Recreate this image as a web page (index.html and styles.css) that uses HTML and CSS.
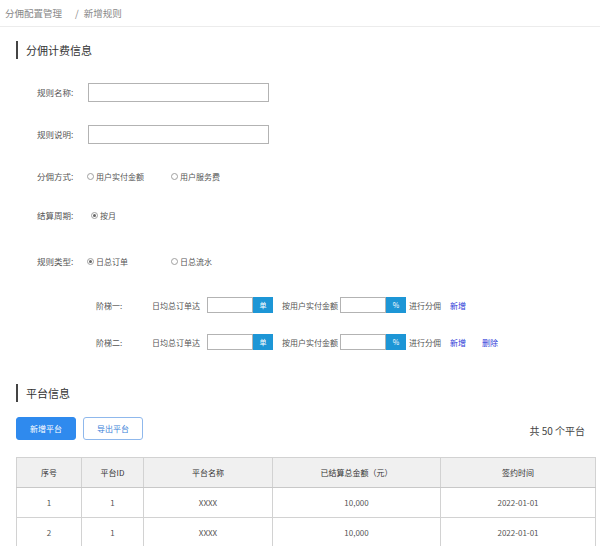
FILE: index.html
```html
<!DOCTYPE html>
<html lang="zh-CN">
<head>
<meta charset="utf-8">
<title>新增规则</title>
<link rel="stylesheet" href="styles.css">
</head>
<body>
<div class="crumb">
  <span class="crumb-item">分佣配置管理</span>
  <span class="crumb-sep">/</span>
  <span class="crumb-item">新增规则</span>
</div>
<div class="page">
  <div class="sec-title s1">分佣计费信息</div>
  <div class="form">
    <div class="row r1">
      <span class="label">规则名称:</span>
      <span class="input wide"></span>
    </div>
    <div class="row r2">
      <span class="label">规则说明:</span>
      <span class="input wide"></span>
    </div>
    <div class="row r3">
      <span class="label">分佣方式:</span>
      <span class="radio opt"><i class="dot"></i>用户实付金额</span>
      <span class="radio"><i class="dot"></i>用户服务费</span>
    </div>
    <div class="row r4">
      <span class="label">结算周期:</span>
      <span class="radio shift"><i class="dot on"></i>按月</span>
    </div>
    <div class="row r5">
      <span class="label">规则类型:</span>
      <span class="radio opt"><i class="dot on"></i>日总订单</span>
      <span class="radio"><i class="dot"></i>日总流水</span>
    </div>
    <div class="row step s-a">
      <span class="step-label">阶梯一:</span>
      <span class="txt t-order">日均总订单达</span>
      <span class="input small"></span><span class="suffix">单</span>
      <span class="txt t-pay">按用户实付金额</span>
      <span class="input small"></span><span class="suffix">%</span>
      <span class="txt t-go">进行分佣</span>
      <a class="link">新增</a>
    </div>
    <div class="row step s-b">
      <span class="step-label">阶梯二:</span>
      <span class="txt t-order">日均总订单达</span>
      <span class="input small"></span><span class="suffix">单</span>
      <span class="txt t-pay">按用户实付金额</span>
      <span class="input small"></span><span class="suffix">%</span>
      <span class="txt t-go">进行分佣</span>
      <a class="link">新增</a>
      <a class="link del">删除</a>
    </div>
  </div>

  <div class="sec-title s2">平台信息</div>
  <div class="toolbar">
    <button class="btn primary">新增平台</button>
    <button class="btn plain">导出平台</button>
    <span class="total">共 50 个平台</span>
  </div>
  <table class="grid">
    <colgroup>
      <col class="c1"><col class="c2"><col class="c3"><col class="c4"><col class="c5">
    </colgroup>
    <thead>
      <tr><th>序号</th><th>平台ID</th><th>平台名称</th><th>已结算总金额（元）</th><th>签约时间</th></tr>
    </thead>
    <tbody>
      <tr><td>1</td><td>1</td><td>XXXX</td><td>10,000</td><td>2022-01-01</td></tr>
      <tr><td>2</td><td>1</td><td>XXXX</td><td>10,000</td><td>2022-01-01</td></tr>
    </tbody>
  </table>
</div>
</body>
</html>
```

FILE: styles.css
```css
* { box-sizing: border-box; }
html, body { margin: 0; padding: 0; background: #fff; }
body {
  font-family: "Noto Sans CJK SC", "Noto Sans", sans-serif;
  color: #555;
  overflow: hidden;
}
.crumb {
  height: 27px;
  border-bottom: 1px solid #ececec;
  display: flex;
  align-items: center;
  padding-left: 5px;
  font-size: 9.5px;
  color: #888;
}
.crumb-sep { margin: 0 5px 0 13px; }
.page { padding: 0 0 0 16px; }
.sec-title {
  height: 18px;
  border-left: 2px solid #444;
  padding-left: 8px;
  display: flex;
  align-items: center;
  font-size: 11px;
  color: #333;
}
.s1 { margin-top: 14px; }
.s2 { margin-top: 32px; }
.form { padding-left: 21px; }
.row {
  height: 20px;
  display: flex;
  align-items: center;
  font-size: 8px;
  color: #555;
}
.r1 { margin-top: 23px; }
.r2 { margin-top: 22px; }
.r3 { margin-top: 22px; }
.r4 { margin-top: 19px; }
.r5 { margin-top: 26px; }
.s-a { margin-top: 24px; }
.s-b { margin-top: 17px; }
.label { width: 51px; font-size: 8.5px; color: #555; }
.r3 .label, .r4 .label, .r5 .label { width: 50px; }
.input {
  display: inline-block;
  border: 1px solid #b3b3b3;
  background: #fff;
}
.input.wide { width: 181px; height: 19px; }
.radio { display: inline-flex; align-items: center; color: #555; }
.radio.opt { width: 84px; }
.radio.shift { margin-left: 4px; }
.dot {
  width: 7px;
  height: 7px;
  border: 1px solid #a0a0a0;
  border-radius: 50%;
  margin-right: 2px;
  display: inline-flex;
  align-items: center;
  justify-content: center;
}
.dot.on::after {
  content: "";
  width: 3px;
  height: 3px;
  border-radius: 50%;
  background: #666;
}
.step { padding-left: 59px; }
.step-label { width: 56px; }
.txt { white-space: nowrap; }
.t-order { margin-right: 7px; }
.t-pay { margin-left: 9px; margin-right: 2px; }
.t-go { margin-left: 3px; }
.input.small { width: 46px; height: 16px; }
.suffix {
  display: inline-flex;
  align-items: center;
  justify-content: center;
  width: 20px;
  height: 16px;
  background: #1d96d6;
  color: #fff;
  font-size: 7px;
}
.link { color: #2d3bd8; margin-left: 9px; cursor: pointer; }
.link.del { margin-left: 16px; }
.toolbar {
  margin-top: 15px;
  display: flex;
  align-items: center;
  width: 569px;
}
.btn {
  height: 23px;
  width: 60px;
  border-radius: 3px;
  font-family: inherit;
  font-size: 8px;
  padding: 0;
}
.btn.primary { background: #2f8aee; border: 1px solid #2f8aee; color: #fff; }
.btn.plain { background: #fff; border: 1px solid #8fb8ec; color: #3a7fd8; margin-left: 7px; }
.total { margin-left: auto; font-size: 10px; color: #444; padding-top: 3px; }
.grid {
  margin-top: 17px;
  border-collapse: collapse;
  table-layout: fixed;
  width: 579px;
  font-size: 8px;
}
.c1 { width: 65px; }
.c2 { width: 62px; }
.c3 { width: 129px; }
.c4 { width: 168px; }
.c5 { width: 155px; }
.grid th, .grid td {
  border: 1px solid #d2d2d2;
  text-align: center;
  height: 30px;
  padding: 0;
}
.grid th { background: #f0f0f0; font-weight: normal; color: #333; border-bottom-color: #c8c8c8; }
.grid td { color: #555; }
```
